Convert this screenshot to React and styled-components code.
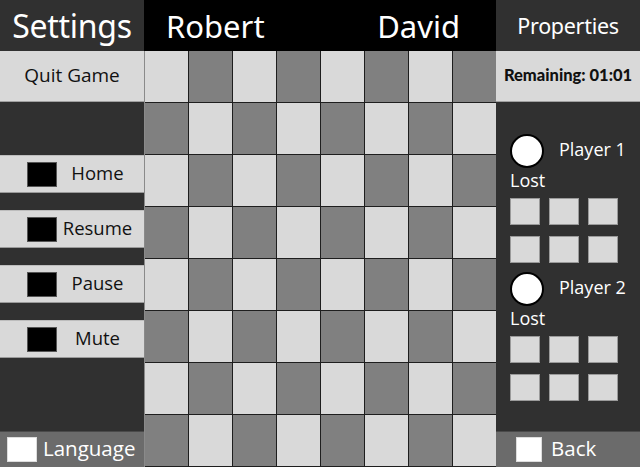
import React from "react";
import styled, { createGlobalStyle } from "styled-components";

const GlobalStyle = createGlobalStyle`
  html, body {
    margin: 0;
    padding: 0;
    background: #303030;
  }
  * {
    box-sizing: border-box;
  }
`;

const menuItems = ["Home", "Resume", "Pause", "Mute"];

export default function App() {
  const cells = [];
  for (let r = 0; r < 8; r++) {
    for (let c = 0; c < 8; c++) {
      cells.push(<Cell key={`${r}-${c}`} dark={(r + c) % 2 === 1} />);
    }
  }

  return (
    <>
      <GlobalStyle />
      <Screen>
        <SidePanel>
          <PanelTitle size={32}>Settings</PanelTitle>
          <InfoBar>Quit Game</InfoBar>
          <Menu>
            {menuItems.map((item) => (
              <MenuButton key={item}>
                <Swatch />
                <MenuLabel>{item}</MenuLabel>
              </MenuButton>
            ))}
          </Menu>
          <FooterBar>
            <WhiteBox />
            <FooterLabel>Language</FooterLabel>
          </FooterBar>
        </SidePanel>

        <Center>
          <Players>
            <PlayerName>Robert</PlayerName>
            <PlayerName>David</PlayerName>
          </Players>
          <Board>{cells}</Board>
        </Center>

        <SidePanel>
          <PanelTitle size={21.5}>Properties</PanelTitle>
          <InfoBar bold>Remaining: 01:01</InfoBar>
          <Stats>
            {["Player 1", "Player 2"].map((p) => (
              <PlayerBlock key={p}>
                <PlayerRow>
                  <Avatar />
                  <PlayerLabel>{p}</PlayerLabel>
                </PlayerRow>
                <LostLabel>Lost</LostLabel>
                <LostGrid>
                  {Array.from({ length: 6 }).map((_, i) => (
                    <LostSlot key={i} />
                  ))}
                </LostGrid>
              </PlayerBlock>
            ))}
          </Stats>
          <FooterBar right>
            <WhiteBox small />
            <FooterLabel>Back</FooterLabel>
          </FooterBar>
        </SidePanel>
      </Screen>
    </>
  );
}

const Screen = styled.div`
  display: grid;
  grid-template-columns: 144px 352px 144px;
  height: 100vh;
  width: 640px;
  overflow: hidden;
  font-family: "Open Sans", "Noto Sans", sans-serif;
`;

const SidePanel = styled.div`
  display: flex;
  flex-direction: column;
  background: #303030;
  height: 100%;
`;

const PanelTitle = styled.div`
  height: 51px;
  display: flex;
  align-items: center;
  justify-content: center;
  color: #fff;
  font-family: "Noto Sans", sans-serif;
  font-size: ${(p) => p.size}px;
  letter-spacing: -0.3px;
`;

const InfoBar = styled.div`
  height: 51px;
  display: flex;
  align-items: center;
  justify-content: center;
  padding-bottom: 3px;
  background: #d9d9d9;
  border-bottom: 1px solid #a0a0a0;
  color: #111;
  font-family: ${(p) => (p.bold ? `"Lato", sans-serif` : `"Open Sans", sans-serif`)};
  font-size: ${(p) => (p.bold ? "16.5px" : "19px")};
  font-weight: ${(p) => (p.bold ? 900 : 400)};
`;

const Menu = styled.div`
  display: flex;
  flex-direction: column;
  gap: 17px;
  padding-top: 53px;
  flex: 1;
`;

const MenuButton = styled.div`
  height: 38px;
  display: flex;
  align-items: center;
  background: #d9d9d9;
  border-top: 1px solid #bdbdbd;
  border-bottom: 1px solid #9a9a9a;
  padding-left: 27px;
  padding-right: 6px;
`;

const Swatch = styled.div`
  width: 30px;
  height: 25px;
  background: #000;
  border: 1px solid #555;
`;

const MenuLabel = styled.span`
  flex: 1;
  text-align: center;
  font-size: 18.5px;
  color: #111;
  padding-bottom: 4px;
`;

const FooterBar = styled.div`
  height: 36px;
  display: flex;
  align-items: center;
  gap: ${(p) => (p.right ? "9px" : "6px")};
  padding-left: ${(p) => (p.right ? "20px" : "7px")};
  background: #6b6b6b;
  border-top: 1px solid #4a4a4a;
`;

const WhiteBox = styled.div`
  width: ${(p) => (p.small ? "26px" : "30px")};
  height: 25px;
  background: #fff;
  border: 1px solid #ddd;
`;

const FooterLabel = styled.span`
  color: #fff;
  font-size: 20.5px;
  padding-bottom: 3px;
`;

const Center = styled.div`
  display: flex;
  flex-direction: column;
`;

const Players = styled.div`
  height: 51px;
  background: #000;
  display: flex;
  align-items: center;
  justify-content: space-between;
  padding: 0 36px 0 22px;
`;

const PlayerName = styled.span`
  color: #fff;
  font-family: "Noto Sans", sans-serif;
  font-size: 31px;
`;

const Board = styled.div`
  display: grid;
  grid-template-columns: repeat(8, 44px);
  grid-template-rows: repeat(8, 52px);
  border-left: 1px solid #8a8a8a;
`;

const Cell = styled.div`
  background: ${(p) => (p.dark ? "#808080" : "#d9d9d9")};
  border-right: 1px solid #1e1e1e;
  border-bottom: 1px solid #1e1e1e;
`;

const Stats = styled.div`
  flex: 1;
  display: flex;
  flex-direction: column;
  gap: 9px;
  padding: 32px 0 0 14px;
`;

const PlayerBlock = styled.div`
  display: flex;
  flex-direction: column;
`;

const PlayerRow = styled.div`
  display: flex;
  align-items: center;
  gap: 15px;
`;

const Avatar = styled.div`
  width: 34px;
  height: 34px;
  border-radius: 50%;
  background: #fff;
  border: 2px solid #000;
`;

const PlayerLabel = styled.span`
  color: #fff;
  font-size: 18px;
  padding-bottom: 4px;
`;

const LostLabel = styled.div`
  color: #fff;
  font-size: 18px;
  height: 30px;
  display: flex;
  align-items: center;
  padding-bottom: 6px;
`;

const LostGrid = styled.div`
  display: grid;
  grid-template-columns: repeat(3, 30px);
  grid-auto-rows: 27px;
  column-gap: 9px;
  row-gap: 11px;
`;

const LostSlot = styled.div`
  background: #d9d9d9;
  border: 1px solid #9a9a9a;
`;
